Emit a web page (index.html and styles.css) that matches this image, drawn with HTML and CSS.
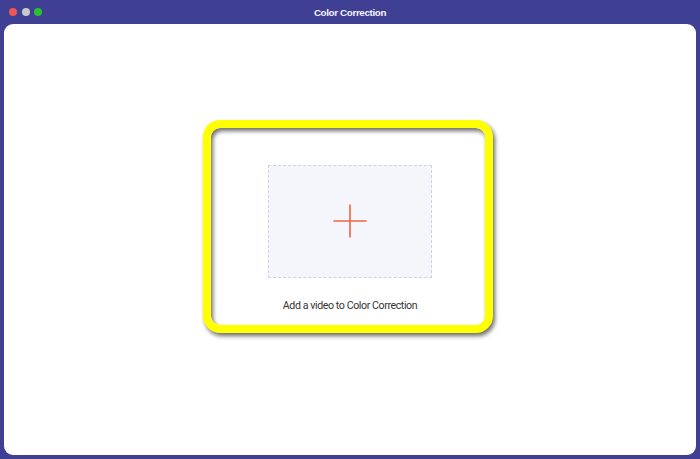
FILE: index.html
```html
<!DOCTYPE html>
<html>
<head>
<meta charset="utf-8">
<link rel="stylesheet" href="styles.css">
</head>
<body>
<div class="window">
  <div class="titlebar">
    <div class="lights">
      <span class="light red"></span>
      <span class="light grey"></span>
      <span class="light green"></span>
    </div>
    <div class="title">Color Correction</div>
  </div>
  <div class="panel">
    <div class="ring">
      <div class="dropzone">
        <svg class="plus" width="34" height="34" viewBox="0 0 34 34">
          <path d="M17 0.5V33.5M0.5 17H33.5" stroke="#f0643e" stroke-width="1.6" fill="none"/>
        </svg>
      </div>
      <div class="caption">Add a video to Color Correction</div>
    </div>
  </div>
</div>
</body>
</html>
```
FILE: styles.css
```css
html, body {
  margin: 0;
  padding: 0;
}
body {
  background: #3f3f94;
  width: 700px;
  height: 459px;
  overflow: hidden;
  font-family: "Liberation Sans", Arial, sans-serif;
}
.window {
  display: flex;
  flex-direction: column;
  height: 459px;
}
.titlebar {
  height: 24px;
  position: relative;
  display: flex;
  align-items: center;
  justify-content: center;
}
.lights {
  position: absolute;
  left: 9px;
  top: 8px;
  display: flex;
  gap: 4.5px;
}
.light {
  width: 8px;
  height: 8px;
  border-radius: 50%;
  display: block;
}
.red { background: #ee5555; }
.grey { background: #c9c9cc; }
.green { background: #2cc12e; }
.title {
  color: #f4f4fa;
  font-size: 9.8px;
  font-weight: bold;
  letter-spacing: -0.35px;
  margin-top: 0px;
}
.panel {
  margin: 0 4px 4px 4px;
  height: 431px;
  background: #ffffff;
  border-radius: 9px;
  padding: 96px 0 0 199px;
  box-sizing: border-box;
}
.ring {
  width: 290px;
  height: 213px;
  box-sizing: border-box;
  border: 8px solid #ffff00;
  border-radius: 17px;
  box-shadow: 2px 3px 4px rgba(60, 60, 60, 0.75), inset 2px 3px 4px rgba(60, 60, 60, 0.75);
  display: flex;
  flex-direction: column;
  align-items: center;
  padding: 37px 0 0 4px;
  background: #ffffff;
}
.dropzone {
  width: 164px;
  height: 113px;
  box-sizing: border-box;
  border: 1px dashed #cfcfe6;
  background: #f4f6fb;
  display: flex;
  align-items: center;
  justify-content: center;
}
.plus {
  display: block;
  margin-top: -2px;
}
.caption {
  margin-top: 21px;
  font-family: Roboto, "Liberation Sans", sans-serif;
  font-size: 10.6px;
  letter-spacing: -0.4px;
  color: #333333;
  line-height: 14px;
}
```
